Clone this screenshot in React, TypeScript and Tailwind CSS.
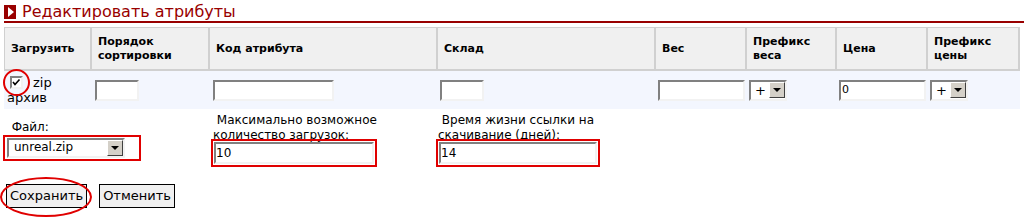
import React from "react";

const inset =
  "border-2 border-t-[#808080] border-l-[#808080] border-r-[#f2f2f2] border-b-[#f2f2f2] bg-white";

function Arrow() {
  return (
    <div className="w-[16px] h-[16px] bg-[#d4d0c8] border border-t-[#ffffff] border-l-[#ffffff] border-r-[#404040] border-b-[#404040] flex items-center justify-center shrink-0">
      <div className="w-0 h-0 border-l-[4px] border-r-[4px] border-t-[4px] border-l-transparent border-r-transparent border-t-black" />
    </div>
  );
}

function SmallSelect() {
  return (
    <div className={`${inset} w-[38px] h-[21px] flex items-center justify-between pl-[4px] pr-[0px] text-[13px] leading-none`}>
      <span>+</span>
      <Arrow />
    </div>
  );
}

const headCell =
  "bg-[#f0f0f0] border-t border-t-[#d0d0d0] border-b-2 border-b-[#d0d0d0] border-r-2 border-r-[#d0d0d0] h-[44px] flex items-center pl-[6px] text-[11px] font-bold leading-[14px]";

export default function App() {
  return (
    <div className="w-[1024px] h-[221px] bg-white text-black overflow-hidden font-['DejaVu_Sans',sans-serif]">
      {/* Title */}
      <div className="flex items-center h-[21px] pl-[4px] pt-[3px]">
        <div className="w-[12px] h-[14px] bg-[#990000] flex items-center justify-center">
          <div className="w-0 h-0 border-t-[5px] border-b-[5px] border-l-[6px] border-t-transparent border-b-transparent border-l-white ml-[1px]" />
        </div>
        <span className="ml-[6px] text-[16px] leading-[18px] text-[#990000]">
          Редактировать атрибуты
        </span>
      </div>
      <div className="h-[2px] bg-[#990000] ml-[4px]" />

      {/* Table */}
      <div className="grid grid-cols-[88px_118px_228px_218px_91px_90px_91px_92px] ml-[4px] mt-[4px] w-[1016px]">
        <div className={`${headCell} border-l border-l-[#d0d0d0]`}>Загрузить</div>
        <div className={headCell}>
          Порядок
          <br />
          сортировки
        </div>
        <div className={headCell}>Код атрибута</div>
        <div className={headCell}>Склад</div>
        <div className={headCell}>Вес</div>
        <div className={headCell}>
          Префикс
          <br />
          веса
        </div>
        <div className={headCell}>Цена</div>
        <div className={headCell}>
          Префикс
          <br />
          цены
        </div>

        {/* Data row */}
        <div className="bg-[#f3f6fe] h-[38px] pl-[3px] text-[13px] leading-[15px] flex flex-col justify-center">
          <div className="flex items-center">
            <div className="relative ml-[3px] mr-[10px]">
              <div className={`${inset} w-[13px] h-[13px] flex items-center justify-center`}>
                <svg width="9" height="9" viewBox="0 0 9 9">
                  <path d="M1 4 L3 6.5 L7.5 1.5" stroke="#000" strokeWidth="1.6" fill="none" />
                </svg>
              </div>
              <div className="absolute left-[-7px] top-[-7px] w-[27px] h-[27px] rounded-full border-2 border-[#e00000]" />
            </div>
            <span>zip</span>
          </div>
          <span>архив</span>
        </div>
        <div className="bg-[#f3f6fe] h-[38px] pl-[3px] flex items-center">
          <div className={`${inset} w-[44px] h-[21px]`} />
        </div>
        <div className="bg-[#f3f6fe] h-[38px] pl-[3px] flex items-center">
          <div className={`${inset} w-[121px] h-[21px]`} />
        </div>
        <div className="bg-[#f3f6fe] h-[38px] pl-[2px] flex items-center">
          <div className={`${inset} w-[44px] h-[21px]`} />
        </div>
        <div className="bg-[#f3f6fe] h-[38px] pl-[2px] flex items-center">
          <div className={`${inset} w-[87px] h-[21px]`} />
        </div>
        <div className="bg-[#f3f6fe] h-[38px] pl-[2px] flex items-center">
          <SmallSelect />
        </div>
        <div className="bg-[#f3f6fe] h-[38px] pl-[2px] flex items-center">
          <div className={`${inset} w-[87px] h-[21px] flex items-center pl-[1px] text-[11px]`}>0</div>
        </div>
        <div className="bg-[#f3f6fe] h-[38px] pl-[2px] flex items-center">
          <SmallSelect />
        </div>

        {/* Bottom row */}
        <div className="col-span-2 h-[62px] flex flex-col justify-center text-[12px] leading-[15px] pl-[3px]">
          <span className="-ml-[3px]">{"\u00a0\u00a0Файл:"}</span>
          <div className="-ml-[4px] w-[138px] h-[26px] border-2 border-[#e00000] pl-[2px] flex items-center">
            <div className={`${inset} w-[118px] h-[20px] flex items-center justify-between pl-[5px] text-[12px]`}>
              <span>unreal.zip</span>
              <Arrow />
            </div>
          </div>
        </div>
        <div className="h-[62px] flex flex-col justify-center text-[12px] leading-[15px] pl-[3px]">
          <span>
            {"\u00a0Максимально возможное"}
            <br />
            количество загрузок:
          </span>
          <div className="-ml-[2px] -mt-[4px] w-fit border-2 border-[#e00000] p-[1px] relative">
            <div className={`${inset} w-[160px] h-[22px] flex items-center text-[12px]`}>10</div>
          </div>
        </div>
        <div className="h-[62px] flex flex-col justify-center text-[12px] leading-[15px]">
          <span>
            {"\u00a0Время жизни ссылки на"}
            <br />
            скачивание (дней):
          </span>
          <div className="-ml-[2px] -mt-[4px] w-fit border-2 border-[#e00000] p-[1px] relative">
            <div className={`${inset} w-[158px] h-[22px] flex items-center text-[12px]`}>14</div>
          </div>
        </div>
        <div />
        <div />
        <div />
        <div />
        <div />
      </div>

      {/* Buttons */}
      <div className="flex items-center gap-[12px] ml-[6px] mt-[13px] text-[13px]">
        <div className="relative">
          <div className="border border-black bg-[#f0f0f0] h-[24px] px-[3px] flex items-center">Сохранить</div>
          <div className="absolute left-[-6px] top-[-7px] w-[92px] h-[40px] rounded-[50%] border-2 border-[#e00000]" />
        </div>
        <div className="border border-black bg-[#f0f0f0] h-[24px] px-[3px] flex items-center">Отменить</div>
      </div>
    </div>
  );
}
